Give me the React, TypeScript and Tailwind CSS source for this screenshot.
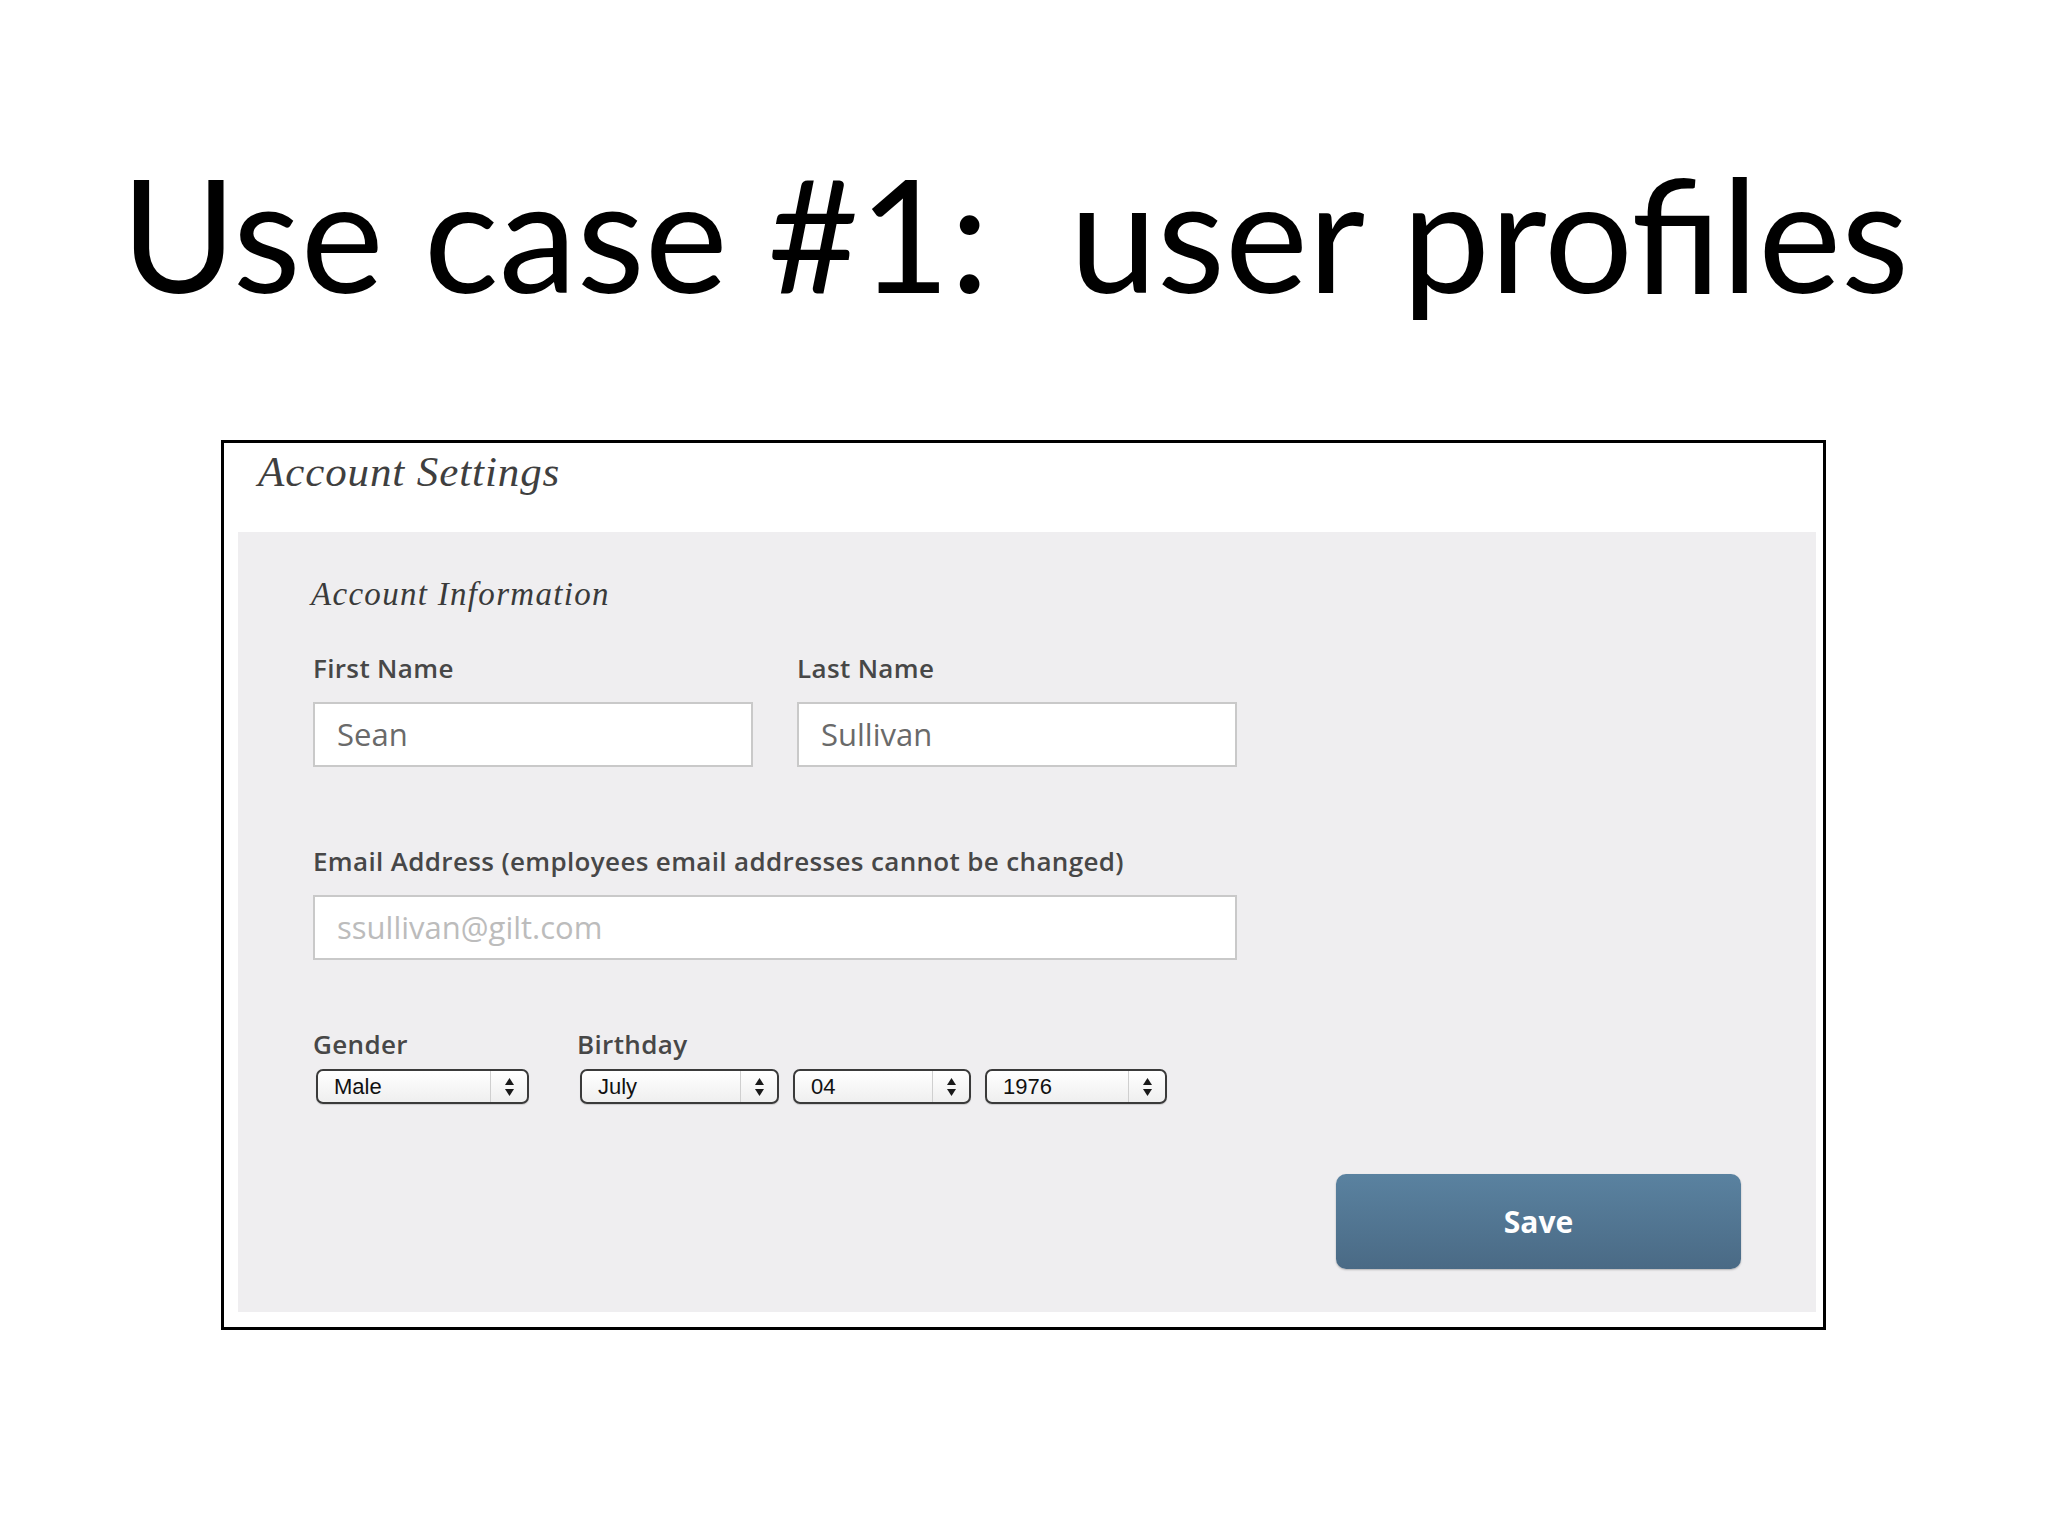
import React from "react";

const labelCls =
  "text-[26px] font-semibold text-[#474747] leading-none tracking-[0.35px]";
const labelFont = { fontFamily: '"Open Sans", "Liberation Sans", sans-serif' };

function Arrows() {
  return (
    <svg width="11" height="20" viewBox="0 0 11 20" className="block">
      <path d="M5.5 1 L10 8 L1 8 Z" fill="#1a1a1a" />
      <path d="M5.5 19 L10 12 L1 12 Z" fill="#1a1a1a" />
    </svg>
  );
}

function Select({ value, width }: { value: string; width: string }) {
  return (
    <div
      className={`${width} h-[35px] rounded-[7px] border-[2px] border-[#3a3a3a] bg-gradient-to-b from-white to-[#efefef] flex items-stretch shadow-[0_1px_1px_rgba(0,0,0,0.15)]`}
    >
      <div
        className="flex-1 flex items-center pl-[16px] text-[22px] text-[#111] leading-none"
        style={{ fontFamily: '"Liberation Sans", Arial, sans-serif' }}
      >
        {value}
      </div>
      <div className="w-[37px] border-l border-[#cfcfcf] flex items-center justify-center">
        <Arrows />
      </div>
    </div>
  );
}

export default function App() {
  return (
    <div className="w-[2048px] h-[1536px] bg-white overflow-hidden">
      <div
        className="pl-[121px] pt-[142px] h-[440px] text-[157px] leading-[180px] text-black whitespace-pre"
        style={{ fontFamily: 'Lato, "Open Sans", sans-serif' }}
      >
        {"Use case #1:  user profiles"}
      </div>

      <div className="ml-[221px] w-[1605px] h-[890px] border-[3px] border-black bg-white flex flex-col">
        <div className="h-[89px] pl-[34px] pt-[6px]">
          <div
            className="italic text-[43px] text-[#3f3f3f] leading-[46px] tracking-[0.9px]"
            style={{ fontFamily: '"Liberation Serif", "DejaVu Serif", serif' }}
          >
            Account Settings
          </div>
        </div>
        <div className="ml-[14px] mr-[7px] h-[780px] bg-[#efeef0] pl-[75px] pt-[45px] flex flex-col">
          <div
            className="italic text-[33px] text-[#3a3a3a] leading-[35px] -ml-[2px] tracking-[1.3px]"
            style={{ fontFamily: '"Liberation Serif", "DejaVu Serif", serif' }}
          >
            Account Information
          </div>

          <div className="flex gap-[44px] mt-[43px]">
            <div className="flex flex-col">
              <div className={labelCls} style={labelFont}>
                First Name
              </div>
              <div
                className="mt-[21px] w-[440px] h-[65px] bg-white border-[2px] border-[#c9c9c9] flex items-center pl-[22px] text-[31px] text-[#6a6a6a]"
                style={labelFont}
              >
                Sean
              </div>
            </div>
            <div className="flex flex-col">
              <div className={labelCls} style={labelFont}>
                Last Name
              </div>
              <div
                className="mt-[21px] w-[440px] h-[65px] bg-white border-[2px] border-[#c9c9c9] flex items-center pl-[22px] text-[31px] text-[#6a6a6a]"
                style={labelFont}
              >
                Sullivan
              </div>
            </div>
          </div>

          <div className="mt-[81px] flex flex-col">
            <div className={labelCls} style={labelFont}>
              Email Address (employees email addresses cannot be changed)
            </div>
            <div
              className="mt-[21px] w-[924px] h-[65px] bg-white border-[2px] border-[#c9c9c9] flex items-center pl-[22px] text-[31px] text-[#bcbcbc]"
              style={labelFont}
            >
              ssullivan@gilt.com
            </div>
          </div>

          <div className="mt-[71px] flex gap-[48px]">
            <div className="flex flex-col">
              <div className={labelCls} style={labelFont}>
                Gender
              </div>
              <div className="mt-[12px] ml-[3px]">
                <Select value="Male" width="w-[213px]" />
              </div>
            </div>
            <div className="flex flex-col">
              <div className={labelCls} style={labelFont}>
                Birthday
              </div>
              <div className="mt-[12px] ml-[3px] flex gap-[14px]">
                <Select value="July" width="w-[199px]" />
                <Select value="04" width="w-[178px]" />
                <Select value="1976" width="w-[182px]" />
              </div>
            </div>
          </div>

          <div className="flex justify-end mt-[70px] pr-[75px]">
            <button
              className="w-[405px] h-[95px] rounded-[10px] bg-gradient-to-b from-[#5a82a0] to-[#4a6a85] text-white text-[30px] font-bold shadow-[0_1px_2px_rgba(0,0,0,0.25)]"
              style={labelFont}
            >
              Save
            </button>
          </div>
        </div>
      </div>
    </div>
  );
}
